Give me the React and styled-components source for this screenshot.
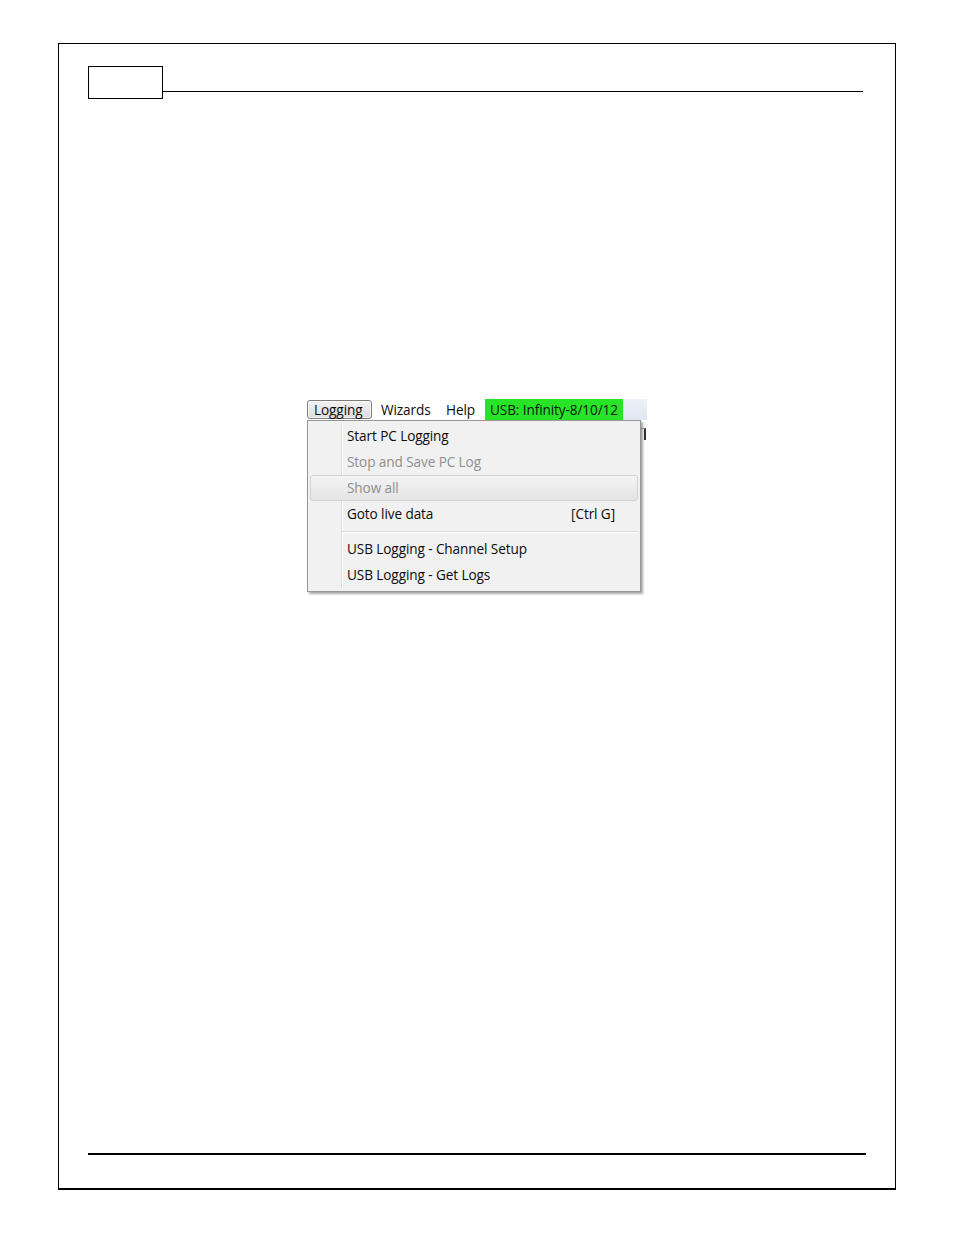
import React from "react";
import styled, { createGlobalStyle } from "styled-components";

const Global = createGlobalStyle`
  html, body { margin: 0; padding: 0; background: #fff; }
  body { font-family: "Open Sans", "Noto Sans", sans-serif; }
`;

const Page = styled.div`
  width: 954px;
  height: 1235px;
  padding: 43px 0 0 58px;
  box-sizing: border-box;
`;

const Frame = styled.div`
  width: 838px;
  height: 1147px;
  box-sizing: border-box;
  border: 1px solid #000;
  border-bottom-width: 2px;
  display: flex;
  flex-direction: column;
  padding: 22px 0 33px 29px;
`;

const Header = styled.div`
  display: flex;
  align-items: flex-end;
`;

const PageBox = styled.div`
  width: 75px;
  height: 33px;
  box-sizing: border-box;
  border: 1px solid #000;
`;

const HeaderRule = styled.div`
  width: 700px;
  height: 1px;
  background: #000;
  margin-bottom: 7px;
`;

const Shot = styled.div`
  margin: 300px 0 0 219px;
  width: 340px;
  font-family: "Open Sans", "Noto Sans", sans-serif;
  font-size: 13.6px;
  color: #0c0c0c;
  position: relative;
  letter-spacing: -0.1px;
`;

const MenuBar = styled.div`
  display: flex;
  align-items: center;
  height: 21px;
  background: #fff;
`;

const TopItem = styled.div`
  height: ${(p) => (p.$active ? "19px" : "21px")};
  box-sizing: border-box;
  display: flex;
  align-items: center;
  flex: none;
  padding-left: ${(p) => p.$pl || 0}px;
  padding-bottom: 1px;
  border: ${(p) => (p.$active ? "1px solid #7d7d7d" : "none")};
  border-radius: 3px;
  background: ${(p) =>
    p.$active ? "linear-gradient(#f2f2f2, #dcdcdc)" : "transparent"};
  box-shadow: ${(p) => (p.$active ? "inset 0 0 0 1px rgba(255,255,255,0.7)" : "none")};
  width: ${(p) => p.$w}px;
  white-space: nowrap;
`;

const Status = styled.div`
  height: 21px;
  flex: none;
  display: flex;
  align-items: center;
  background: #27e427;
  padding: 0 5px 1px;
  width: 138px;
  box-sizing: border-box;
  color: #0a1a0a;
  white-space: nowrap;
`;

const BarTail = styled.div`
  flex: 1;
  height: 21px;
  background: linear-gradient(#eef2f8, #dfe6f0);
`;

const Dropdown = styled.div`
  position: absolute;
  left: 0;
  top: 21px;
  width: 334px;
  box-sizing: border-box;
  border: 1px solid #979797;
  background: #f1f1f1;
  box-shadow: 2px 2px 2px rgba(0, 0, 0, 0.35);
  padding: 2px 2px 3px;
  z-index: 2;
`;

const Gutter = styled.div`
  position: absolute;
  top: 2px;
  bottom: 3px;
  left: 33px;
  width: 1px;
  background: #dedede;
  border-right: 1px solid #fff;
`;

const Item = styled.div`
  position: relative;
  height: 26px;
  box-sizing: border-box;
  display: flex;
  align-items: center;
  justify-content: space-between;
  padding: 0 22px 2px 36px;
  color: ${(p) => (p.$disabled ? "#8e8e8e" : "#0c0c0c")};
  border: 1px solid ${(p) => (p.$hover ? "#d2d2d2" : "transparent")};
  border-radius: 3px;
  background: ${(p) =>
    p.$hover ? "linear-gradient(#f4f4f4, #e4e4e4)" : "transparent"};
  white-space: nowrap;
`;

const Separator = styled.div`
  position: relative;
  height: 9px;
  display: flex;
  align-items: center;
  padding-left: 32px;
  &::after {
    content: "";
    flex: 1;
    height: 1px;
    background: #dcdcdc;
    border-bottom: 1px solid #fff;
  }
`;

const BehindEdge = styled.div`
  position: absolute;
  left: 334px;
  top: 29px;
  width: 5px;
  height: 12px;
  border-top: 1px solid #aaa;
  border-right: 2px solid #333;
  box-sizing: border-box;
`;

const FooterRule = styled.div`
  margin-top: auto;
  width: 778px;
  height: 2px;
  background: #000;
`;

export default function App() {
  return (
    <Page>
      <Global />
      <Frame>
        <Header>
          <PageBox />
          <HeaderRule />
        </Header>
        <Shot>
          <MenuBar>
            <TopItem $active $pl={6} $w={65}>Logging</TopItem>
            <TopItem $pl={9} $w={66}>Wizards</TopItem>
            <TopItem $pl={8} $w={47}>Help</TopItem>
            <Status>USB: Infinity-8/10/12</Status>
            <BarTail />
          </MenuBar>
          <BehindEdge />
          <Dropdown>
            <Gutter />
            <Item>Start PC Logging</Item>
            <Item $disabled>Stop and Save PC Log</Item>
            <Item $disabled $hover>Show all</Item>
            <Item>
              <span>Goto live data</span>
              <span>[Ctrl G]</span>
            </Item>
            <Separator />
            <Item>USB Logging - Channel Setup</Item>
            <Item>USB Logging - Get Logs</Item>
          </Dropdown>
        </Shot>
        <FooterRule />
      </Frame>
    </Page>
  );
}
